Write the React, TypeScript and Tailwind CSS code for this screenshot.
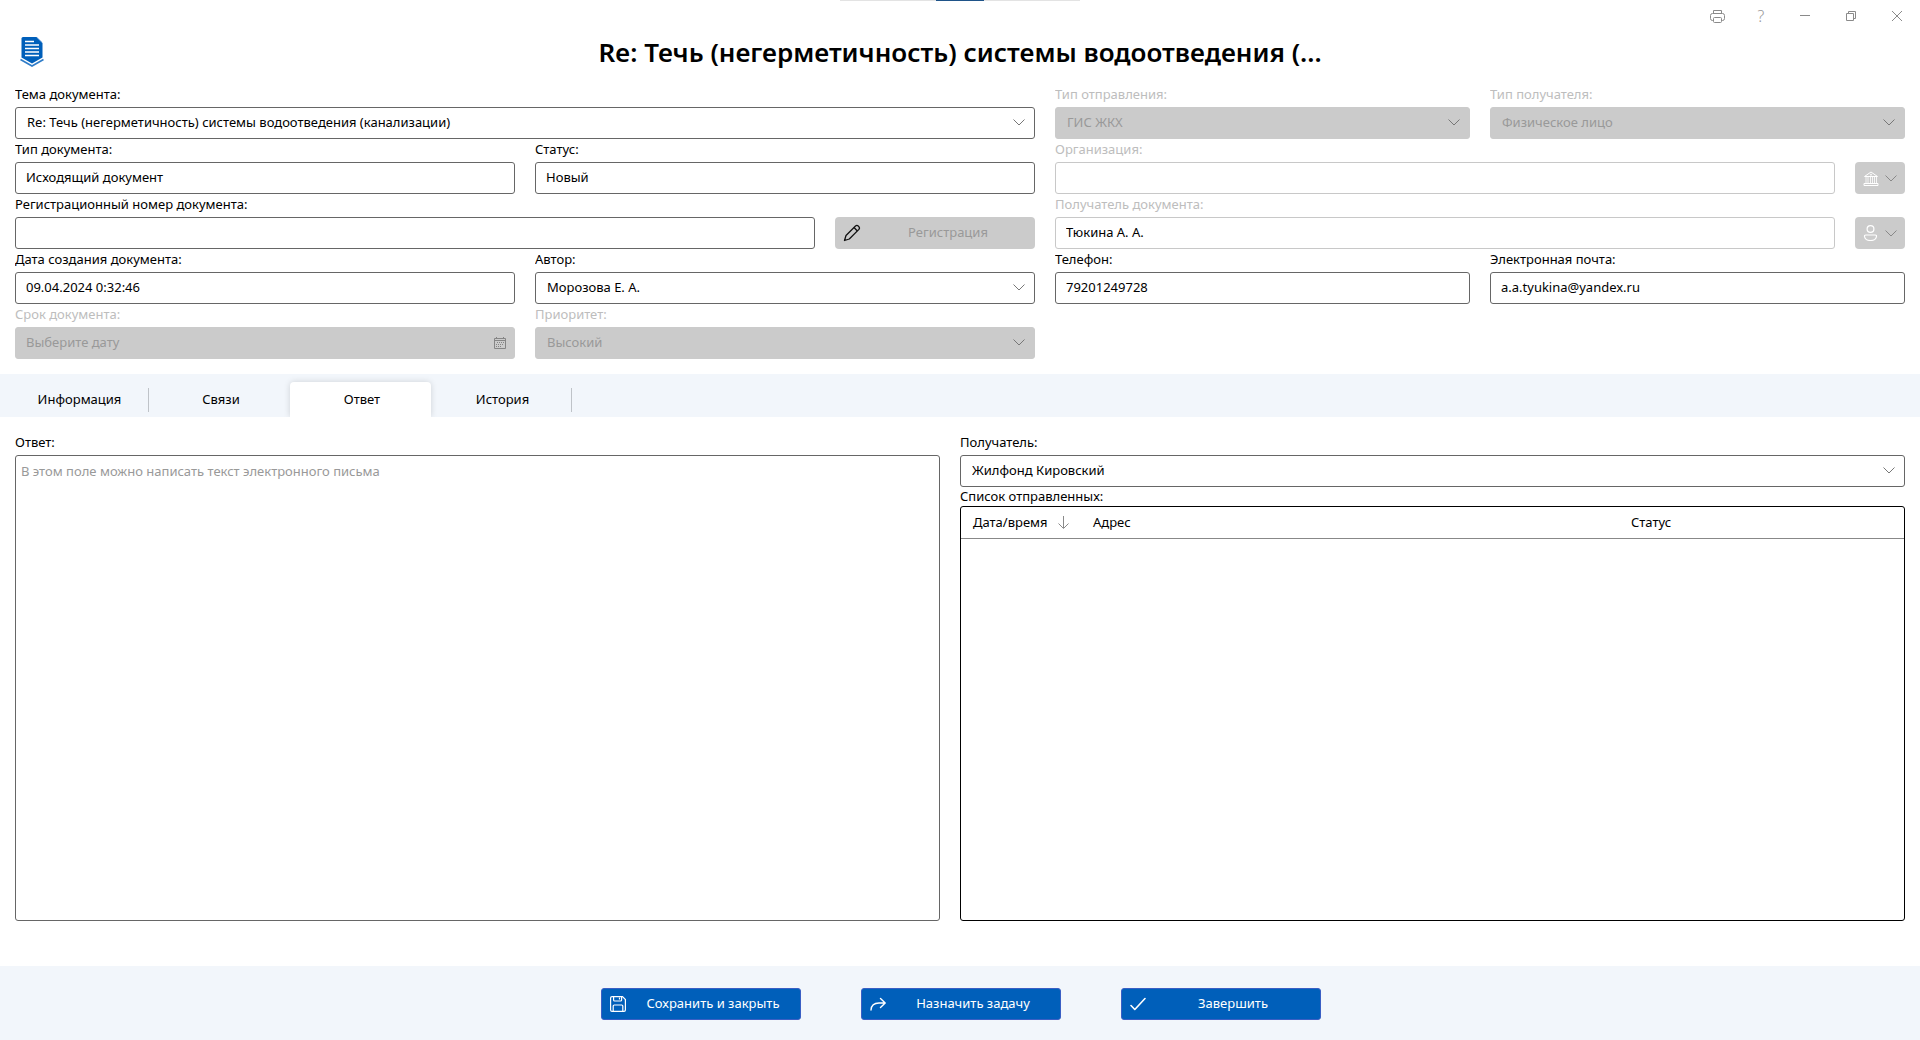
import { useId, useState } from "react";
import type { ReactNode } from "react";

const cx = (...parts: (string | false | undefined)[]) => parts.filter(Boolean).join(" ");

function Chevron({ className }: { className?: string }) {
  return (
    <svg viewBox="0 0 12 7" className={cx("h-[7px] w-3 shrink-0", className)} fill="none" stroke="currentColor">
      <path d="M0.5 0.5 6 6 11.5 0.5" />
    </svg>
  );
}

function Label({ id, muted, children }: { id: string; muted?: boolean; children: ReactNode }) {
  return (
    <label htmlFor={id} className={cx("block h-[23px] truncate leading-5", muted ? "text-[#bdbdbd]" : "text-black")}>
      {children}
    </label>
  );
}

type FieldProps = { label: string; value?: string; placeholder?: string; muted?: boolean; className?: string };

function TextField({ label, value = "", muted, className }: FieldProps) {
  const id = useId();
  return (
    <div className={cx("min-w-0", className)}>
      <Label id={id} muted={muted}>{label}</Label>
      <input
        id={id}
        type="text"
        defaultValue={value}
        className={cx("block h-8 w-full rounded-[3px] border bg-white px-2.5 pb-0.5 text-black outline-none", muted ? "border-[#c8c8c8]" : "border-[#666]")}
      />
    </div>
  );
}

function SelectField({ label, value = "", muted, className }: FieldProps) {
  const id = useId();
  return (
    <div className={cx("min-w-0", className)}>
      <Label id={id} muted={muted}>{label}</Label>
      <div className="relative">
        <select
          id={id}
          disabled={muted}
          className={cx(
            "block h-8 w-full appearance-none rounded-[3px] border pr-8 pl-[11px] opacity-100 outline-none",
            muted ? "border-[#cbcbcb] bg-[#cbcbcb] text-[#999]" : "border-[#666] bg-white text-black",
          )}
        >
          <option>{value}</option>
        </select>
        <Chevron className="pointer-events-none absolute top-3 right-2.5 text-[#777]" />
      </div>
    </div>
  );
}

function DateField({ label, placeholder, className }: FieldProps) {
  const id = useId();
  return (
    <div className={cx("min-w-0", className)}>
      <Label id={id} muted>{label}</Label>
      <div className="relative">
        <input
          id={id}
          disabled
          placeholder={placeholder}
          className="block h-8 w-full rounded-[3px] border border-[#cbcbcb] bg-[#cbcbcb] px-2.5 pb-0.5 placeholder:text-[#999]"
        />
        <svg viewBox="0 0 12 12" className="pointer-events-none absolute top-2.5 right-[9px] h-3 w-3" fill="none" stroke="#858585">
          <path d="M0.5 1.5h11v10H0.5zM0.5 3.5h11M2.5 0v1M9.5 0v1" />
          <path d="M3 5.5h7M2 7.500h8M2 9.500h6" strokeDasharray="1 1" />
        </svg>
      </div>
    </div>
  );
}

function PickerButton({ label, children }: { label: string; children: ReactNode }) {
  return (
    <button type="button" disabled aria-label={label} className="flex h-8 w-[50px] shrink-0 items-center gap-1.5 rounded bg-[#cbcbcb] pl-2 text-white">
      {children}
      <Chevron className="text-[#888]" />
    </button>
  );
}

function ActionButton({ icon, children }: { icon: ReactNode; children: ReactNode }) {
  return (
    <button type="button" className="flex h-8 w-[200px] items-center rounded-[3px] border border-[#3a5fc4] bg-[#005fba] pl-2 text-white">
      {icon}
      <span className="flex-1 text-center">{children}</span>
    </button>
  );
}

function Logo() {
  return (
    <svg viewBox="0 0 24 30" className="h-[30px] w-6" aria-hidden="true">
      <path d="M3 0h13.500L22.500 6v14.500L12 26.500 1.500 20.500V1.500Q1.500 0 3 0z" fill="#005fba" />
      <path d="M16.800 0.500 22 5.500" stroke="#4d93d6" strokeWidth="0.800" />
      <path d="M0.500 22.500 12 29 23.500 22.500" fill="none" stroke="#2f7cc8" strokeWidth="1.600" />
      <path d="M5 4.500h9M5 8h14M5 11.500h14M5 15h14M5 18.500h14" stroke="#fff" strokeWidth="1.500" />
    </svg>
  );
}

function WindowControls() {
  const button = "flex h-8 w-[46px] items-center justify-center text-[#8a8a8a]";
  return (
    <div className="flex h-8 justify-end">
      <button type="button" aria-label="Печать" className={button}>
        <svg viewBox="0 0 15 13" className="h-[13px] w-[15px]" fill="none" stroke="currentColor">
          <path d="M3.500 3.500v-3h8v3M3.500 10.500h-1q-2 0-2-2v-3q0-2 2-2h10q2 0 2 2v3q0 2-2 2h-1M4.500 7.500h6q1 0 1 1v3q0 1-1 1h-6q-1 0-1-1v-3q0-1 1-1z" />
        </svg>
      </button>
      <button type="button" aria-label="Справка" className="flex h-8 w-[42px] items-center justify-center text-base font-light text-[#999]">?</button>
      <button type="button" aria-label="Свернуть" className={button}>
        <svg viewBox="0 0 10 10" className="h-2.5 w-2.5" stroke="currentColor"><path d="M0 4.500h10" /></svg>
      </button>
      <button type="button" aria-label="Восстановить" className={button}>
        <svg viewBox="0 0 10 10" className="h-2.5 w-2.5" fill="none" stroke="currentColor">
          <path d="M0.500 2.500h7v7h-7zM2.500 2.500v-2h7v7h-2" />
        </svg>
      </button>
      <button type="button" aria-label="Закрыть" className={button}>
        <svg viewBox="0 0 10 10" className="h-2.5 w-2.5" stroke="currentColor"><path d="M0 0 10 10M10 0 0 10" /></svg>
      </button>
    </div>
  );
}

const tabs = ["Информация", "Связи", "Ответ", "История"];

export default function App() {
  const [active, setActive] = useState("Ответ");
  return (
    <div className="flex min-h-screen flex-col bg-white font-['Noto_Sans','Open_Sans',sans-serif] text-[13px] text-black">
      <div className="relative">
        <div className="absolute inset-x-0 top-0 mx-auto flex h-px w-[240px] justify-center bg-[#e3e3e3]">
          <div className="h-px w-12 bg-[#1f5489]" />
        </div>
        <WindowControls />
      </div>

      <header className="flex h-10 items-center px-5">
        <Logo />
        <h1 className="min-w-0 flex-1 truncate pr-6 text-center text-[26px] leading-10 font-semibold">
          Re: Течь (негерметичность) системы водоотведения (...
        </h1>
      </header>

      <form className="grid grid-cols-[1020fr_850fr] gap-x-5 px-[15px] pt-3 pb-[15px]">
        <div className="grid grid-cols-2 content-start gap-x-5">
          <SelectField label="Тема документа:" value="Re: Течь (негерметичность) системы водоотведения (канализации)" className="col-span-2" />
          <TextField label="Тип документа:" value="Исходящий документ" />
          <TextField label="Статус:" value="Новый" />
          <div className="col-span-2 flex items-end gap-5">
            <TextField label="Регистрационный номер документа:" className="flex-1" />
            <button type="button" disabled className="flex h-8 w-[200px] items-center rounded bg-[#cbcbcb] pl-2 text-[#999]">
              <svg viewBox="0 0 18 18" className="h-[18px] w-[18px]" fill="none" stroke="#111" strokeWidth="1.300" strokeLinejoin="round">
                <path d="M1.500 16.500 3 11.500 12.500 2Q14 0.700 15.500 2.200 17.200 3.800 15.900 5.400L6.300 15z" />
                <path d="M11 3.500 14.400 7" />
              </svg>
              <span className="flex-1 text-center">Регистрация</span>
            </button>
          </div>
          <TextField label="Дата создания документа:" value="09.04.2024 0:32:46" />
          <SelectField label="Автор:" value="Морозова Е. А." />
          <DateField label="Срок документа:" placeholder="Выберите дату" />
          <SelectField label="Приоритет:" value="Высокий" muted />
        </div>

        <div className="grid grid-cols-2 content-start gap-x-5">
          <SelectField label="Тип отправления:" value="ГИС ЖКХ" muted />
          <SelectField label="Тип получателя:" value="Физическое лицо" muted />
          <div className="col-span-2 flex items-end gap-5">
            <TextField label="Организация:" muted className="flex-1" />
            <PickerButton label="Выбрать организацию">
              <svg viewBox="0 0 16 15" className="h-[15px] w-4" fill="none" stroke="currentColor">
                <path d="M1.500 5.500 8 1 14.500 5.500zM1 12.500h14v2H1z" />
                <path d="M3 6v6M5 6v6M7.500 6v6M9.500 6v6M11.500 6v6M13.500 6v6" strokeWidth="0.800" />
                <circle cx="8" cy="3.700" r="0.600" />
              </svg>
            </PickerButton>
          </div>
          <div className="col-span-2 flex items-end gap-5">
            <TextField label="Получатель документа:" value="Тюкина А. А." muted className="flex-1" />
            <PickerButton label="Выбрать получателя">
              <svg viewBox="0 0 16 16" className="h-4 w-4" fill="none" stroke="currentColor" strokeWidth="1.200">
                <circle cx="7.500" cy="4" r="3.400" />
                <path d="M2.800 10h9.400q1.500 0 1.300 1.500-.7 4-6 4t-6-4Q1.300 10 2.800 10z" />
              </svg>
            </PickerButton>
          </div>
          <TextField label="Телефон:" value="79201249728" />
          <TextField label="Электронная почта:" value="a.a.tyukina@yandex.ru" />
        </div>
      </form>

      <div role="tablist" className="flex h-[43px] items-end overflow-hidden bg-[#f2f6fb] px-2">
        {tabs.map((tab) => {
          const selected = tab === active;
          return (
            <button
              key={tab}
              type="button"
              role="tab"
              aria-selected={selected}
              onClick={() => setActive(tab)}
              className={cx(
                "flex h-[35px] w-[141px] items-center justify-center",
                selected && "rounded-t bg-white shadow-[0_0_6px_rgba(0,0,0,0.15)]",
              )}
            >
              <span className={cx("flex h-6 flex-1 items-center justify-center pl-[3px]", (tab === "Информация" || tab === "История") && "border-r border-[#bfc3c8]")}>
                {tab}
              </span>
            </button>
          );
        })}
      </div>

      <main className="grid flex-1 grid-cols-[925fr_945fr] gap-x-5 px-[15px] pt-[15px] pb-[45px]">
        <section className="flex flex-col">
          <Label id="reply">Ответ:</Label>
          <textarea
            id="reply"
            placeholder="В этом поле можно написать текст электронного письма"
            className="block w-full flex-1 resize-none rounded-[3px] border border-[#666] px-[5px] py-[5px] leading-5 outline-none placeholder:text-[#999]"
          />
        </section>
        <section className="flex flex-col">
          <SelectField label="Получатель:" value="Жилфонд Кировский" />
          <h2 className="h-[19px] leading-[19px]">Список отправленных:</h2>
          <div className="flex-1 rounded-[3px] border border-black">
            <table className="w-full table-fixed border-collapse text-left">
              <thead>
                <tr className="h-[31px] border-b border-[#888]">
                  <th className="w-[120px] pl-3 font-normal">
                    <span className="flex items-center justify-between pr-3">
                      Дата/время
                      <svg viewBox="0 0 11 13" className="h-[13px] w-[11px]" fill="none" stroke="#8a8a8a">
                        <path d="M5.500 0v12M0.500 7.500l5 5 5-5" />
                      </svg>
                    </span>
                  </th>
                  <th className="pl-3 font-normal">Адрес</th>
                  <th className="w-[285px] pl-3 font-normal">Статус</th>
                </tr>
              </thead>
            </table>
          </div>
        </section>
      </main>

      <footer className="flex h-[74px] items-start justify-center gap-[60px] bg-[#f2f6fb] pt-[22px] pl-0.5">
        <ActionButton
          icon={
            <svg viewBox="0 0 16 16" className="h-4 w-4" fill="none" stroke="currentColor" strokeWidth="1.200">
              <path d="M2 .6h10.500L15.400 3.500V14q0 1.400-1.400 1.400H2Q.6 15.400.6 14V2Q.6.6 2 .6z" />
              <path d="M3.600.6V4q0 1 1 1h6q1 0 1-1V.6M3.200 15.400V10q0-1 1-1h7.600q1 0 1 1v5.400M9.500 1.500v2" />
            </svg>
          }
        >
          Сохранить и закрыть
        </ActionButton>
        <ActionButton
          icon={
            <svg viewBox="0 0 16 16" className="h-4 w-4" fill="none" stroke="currentColor" strokeWidth="1.400" strokeLinecap="round" strokeLinejoin="round">
              <path d="M1 14Q1.500 7 9 7h6M10.500 2.500 15.200 7 10.500 11.500" />
            </svg>
          }
        >
          Назначить задачу
        </ActionButton>
        <ActionButton
          icon={
            <svg viewBox="0 0 16 16" className="h-4 w-4" fill="none" stroke="currentColor" strokeWidth="1.600" strokeLinecap="round" strokeLinejoin="round">
              <path d="M1 9.500 4.800 13.500 15 2.500" />
            </svg>
          }
        >
          Завершить
        </ActionButton>
      </footer>
    </div>
  );
}
